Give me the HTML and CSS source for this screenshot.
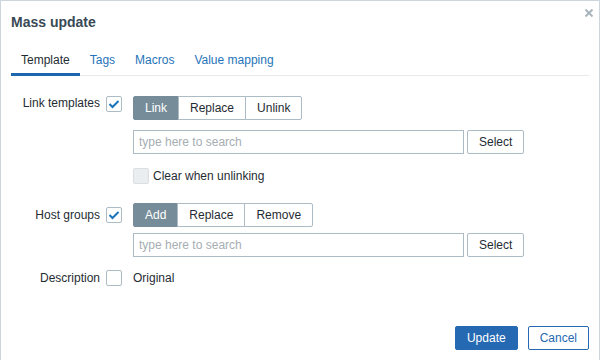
FILE: index.html
```html
<!DOCTYPE html>
<html>
<head>
<meta charset="utf-8">
<link rel="stylesheet" href="styles.css">
</head>
<body>
<div class="dialog">
  <div class="header">
    <h4 class="title">Mass update</h4>
    <span class="close"><svg width="8" height="8" viewBox="0 0 8 8"><path d="M0.5 0.5 L7.5 7.5 M7.5 0.5 L0.5 7.5" stroke="#a9b5bd" stroke-width="2" fill="none"/></svg></span>
  </div>
  <ul class="tabs">
    <li class="tab active">Template</li>
    <li class="tab">Tags</li>
    <li class="tab">Macros</li>
    <li class="tab">Value mapping</li>
  </ul>
  <div class="form">
    <div class="row row-templates">
      <div class="label">Link templates</div>
      <div class="cb-cell"><span class="cb checked"><svg width="14" height="14" viewBox="0 0 14 14"><path d="M2.5 7 L5.5 10 L11.5 4" stroke="#1b74ba" stroke-width="2" fill="none"/></svg></span></div>
      <div class="controls">
        <div class="seg">
          <span class="seg-btn on">Link</span><span class="seg-btn">Replace</span><span class="seg-btn">Unlink</span>
        </div>
        <div class="search-row">
          <div class="search">type here to search</div>
          <span class="btn-alt">Select</span>
        </div>
        <div class="check-row">
          <span class="cb disabled"></span>
          <span class="check-label">Clear when unlinking</span>
        </div>
      </div>
    </div>
    <div class="row row-groups">
      <div class="label">Host groups</div>
      <div class="cb-cell"><span class="cb checked"><svg width="14" height="14" viewBox="0 0 14 14"><path d="M2.5 7 L5.5 10 L11.5 4" stroke="#1b74ba" stroke-width="2" fill="none"/></svg></span></div>
      <div class="controls">
        <div class="seg">
          <span class="seg-btn on">Add</span><span class="seg-btn">Replace</span><span class="seg-btn">Remove</span>
        </div>
        <div class="search-row tight">
          <div class="search">type here to search</div>
          <span class="btn-alt">Select</span>
        </div>
      </div>
    </div>
    <div class="row row-desc">
      <div class="label">Description</div>
      <div class="cb-cell"><span class="cb"></span></div>
      <div class="controls"><span class="plain">Original</span></div>
    </div>
  </div>
  <div class="footer">
    <span class="btn-primary">Update</span>
    <span class="btn-outline">Cancel</span>
  </div>
</div>
</body>
</html>
```
FILE: styles.css
```css
html, body {
  margin: 0;
  padding: 0;
  background: #ffffff;
}
body {
  font-family: "Liberation Sans", Arial, sans-serif;
  font-size: 12px;
  color: #1f2c33;
}
.dialog {
  box-sizing: border-box;
  width: 600px;
  height: 360px;
  border: 1px solid #ccd5db;
  border-bottom: none;
  background: #ffffff;
  position: relative;
}
.header {
  padding: 12px 10px 0 10px;
  height: 18px;
}
.title {
  margin: 0;
  font-size: 14px;
  font-weight: bold;
  line-height: 18px;
  color: #394955;
}
.close {
  position: absolute;
  top: 8px;
  right: 6px;
  width: 8px;
  height: 8px;
  display: block;
}
.close svg {
  display: block;
}
.tabs {
  list-style: none;
  margin: 22px 10px 0 10px;
  padding: 0;
  display: flex;
  border-bottom: 1px solid #e6eaed;
  height: 22px;
}
.tab {
  padding: 0 10px;
  line-height: 14px;
  height: 22px;
  box-sizing: border-box;
  color: #1f74b9;
}
.tab.active {
  color: #1f2c33;
  border-bottom: 3px solid #1d66ae;
  height: 23px;
}
.form {
  margin-top: 20px;
}
.row {
  display: flex;
  align-items: flex-start;
}
.label {
  width: 99px;
  margin-right: 6px;
  text-align: right;
  line-height: 14px;
}
.cb-cell {
  width: 16px;
  margin-right: 11px;
}
.cb {
  box-sizing: border-box;
  display: block;
  width: 16px;
  height: 16px;
  border: 1px solid #acbbc4;
  border-radius: 2px;
  background: #ffffff;
}
.cb svg {
  display: block;
  margin: 0;
}
.cb.disabled {
  background: #ebeef0;
  border-color: #d9dfe3;
}
.controls {
  display: flex;
  flex-direction: column;
  align-items: flex-start;
}
.seg {
  display: flex;
  height: 24px;
}
.seg-btn {
  box-sizing: border-box;
  height: 24px;
  line-height: 22px;
  padding: 0 11px;
  border: 1px solid #acbbc4;
  background: #ffffff;
  color: #1f2c33;
  margin-left: -1px;
}
.seg-btn:first-child {
  margin-left: 0;
  border-radius: 2px 0 0 2px;
}
.seg-btn:last-child {
  border-radius: 0 2px 2px 0;
}
.seg-btn.on {
  background: #768d99;
  border-color: #768d99;
  color: #ffffff;
}
.search-row {
  display: flex;
  margin-top: 10px;
}
.search-row.tight {
  margin-top: 6px;
}
.search {
  box-sizing: border-box;
  width: 331px;
  height: 24px;
  line-height: 22px;
  padding: 0 5px;
  border: 1px solid #acbbc4;
  color: #a6aeb3;
}
.btn-alt {
  box-sizing: border-box;
  margin-left: 3px;
  height: 24px;
  line-height: 22px;
  padding: 0 11px;
  border: 1px solid #acbbc4;
  border-radius: 2px;
  color: #1f2c33;
  background: #ffffff;
}
.check-row {
  display: flex;
  align-items: center;
  height: 24px;
  margin-top: 10px;
}
.check-label {
  margin-left: 4px;
}
.row-templates .label {
  margin-top: 0;
}
.row-groups {
  margin-top: 15px;
}
.row-groups .label {
  margin-top: 5px;
}
.row-groups .cb-cell {
  margin-top: 4px;
}
.row-desc {
  margin-top: 13px;
}
.row-desc .label {
  margin-top: 1px;
}
.plain {
  line-height: 14px;
  margin-top: 1px;
}
.footer {
  position: absolute;
  right: 10px;
  bottom: 10px;
  display: flex;
  gap: 10px;
}
.btn-primary, .btn-outline {
  box-sizing: border-box;
  height: 24px;
  line-height: 22px;
  padding: 0 11px;
  border-radius: 2px;
  border: 1px solid #2569b2;
}
.btn-primary {
  background: #2569b2;
  color: #ffffff;
}
.btn-outline {
  background: #ffffff;
  color: #2569b2;
}
```
